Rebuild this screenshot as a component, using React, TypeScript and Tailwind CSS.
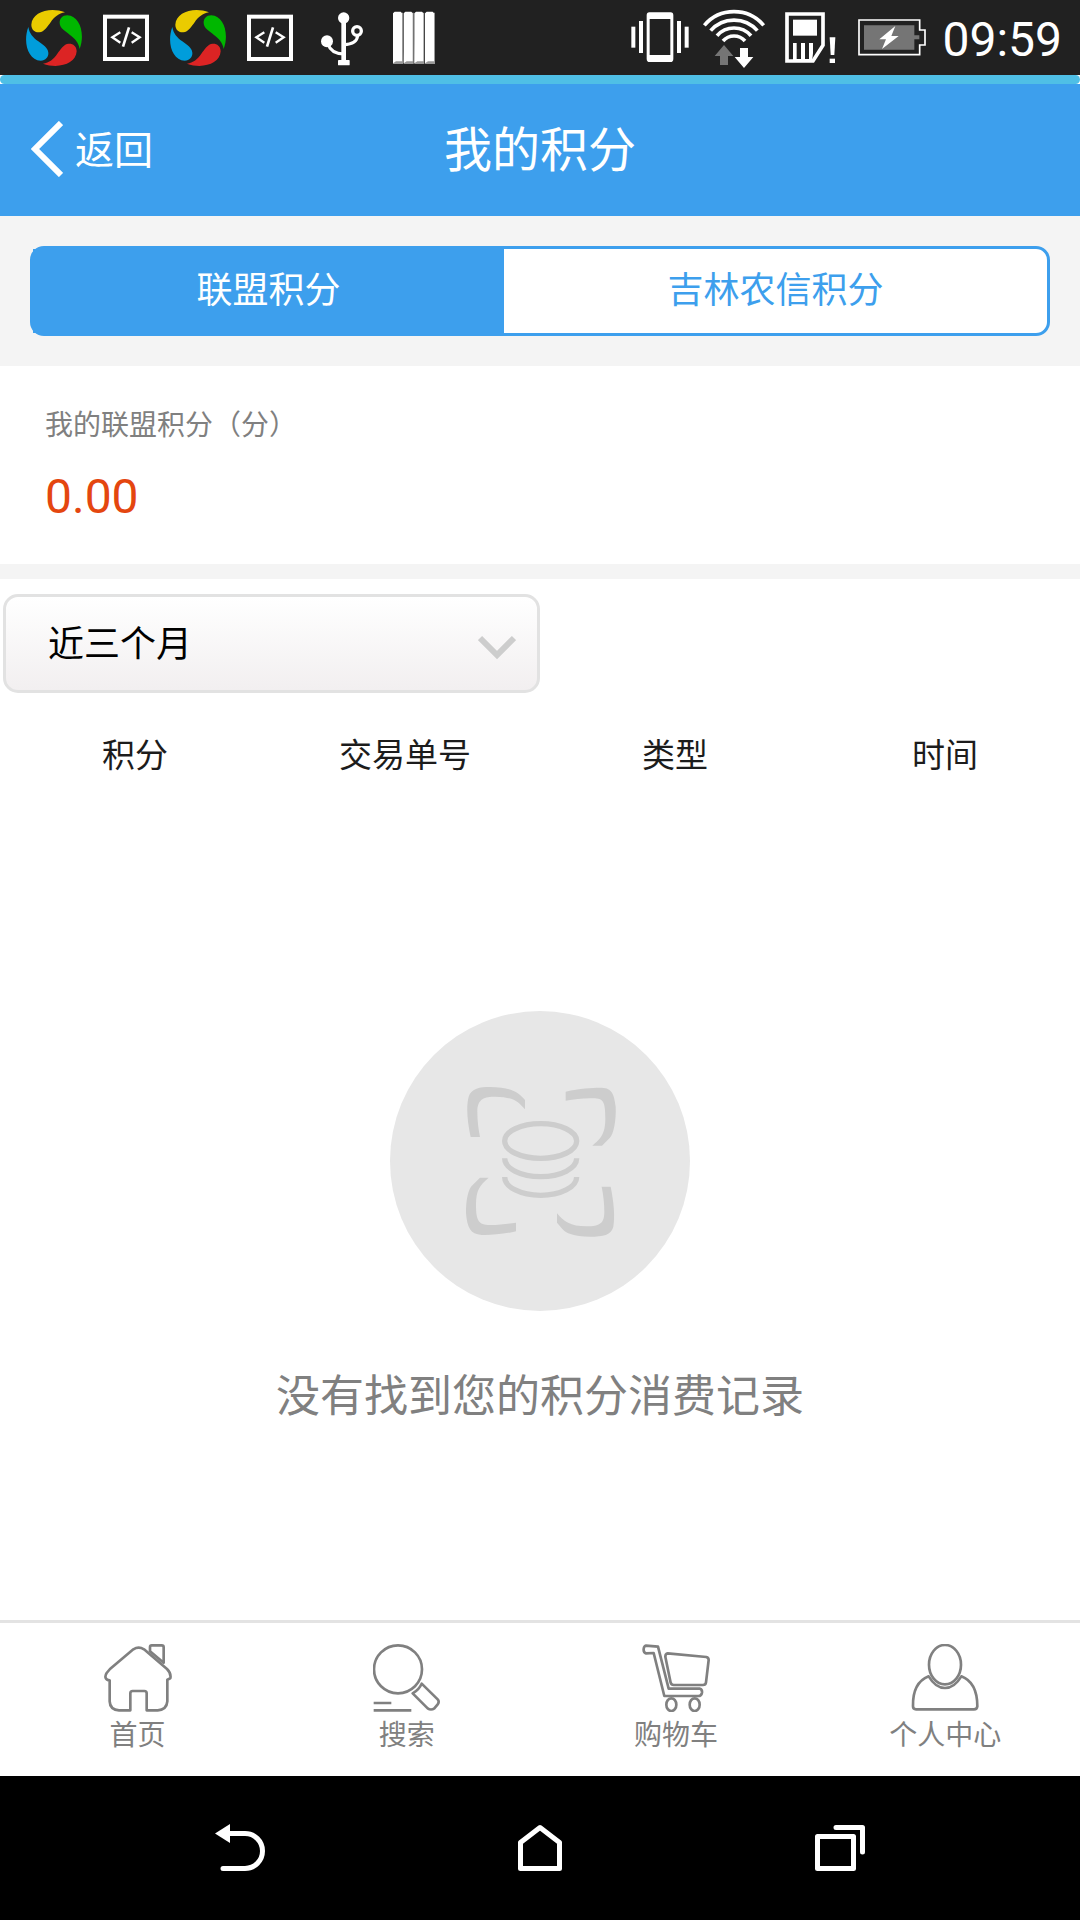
import { useState } from "react";
import type { ReactNode } from "react";

const blade =
  "M195 37 C150 20 96 36 94 74 C94 90 106 98 118 97 C133 96 142 80 152 67 C163 51 176 40 195 37Z";

function PinwheelIcon() {
  return (
    <svg viewBox="78 30 168 168" className="w-14 h-14" aria-hidden="true">
      <path d={blade} fill="#eacb00" />
      <path d={blade} fill="#00b700" transform="rotate(90 162 114)" />
      <path d={blade} fill="#dc2424" transform="rotate(180 162 114)" />
      <path d={blade} fill="#009ddb" transform="rotate(270 162 114)" />
    </svg>
  );
}

function CodeIcon() {
  return (
    <svg viewBox="294 30 168 168" className="w-14 h-14" fill="none" stroke="#fff" aria-hidden="true">
      <rect x="315" y="50" width="126" height="127" strokeWidth="12" />
      <path d="M361 97 L337 112 L361 128 M395 97 L419 112 L395 128" strokeWidth="7" />
      <path d="M387 82 L369 140" strokeWidth="8" />
    </svg>
  );
}

function UsbIcon() {
  return (
    <svg viewBox="942 30 168 168" className="w-14 h-14" fill="none" stroke="#fff" aria-hidden="true">
      <circle cx="1031" cy="54" r="17" fill="#fff" stroke="none" />
      <circle cx="981" cy="124" r="18" fill="#fff" stroke="none" />
      <circle cx="1071" cy="93" r="13" strokeWidth="10" />
      <path d="M1031 54 V184" strokeWidth="14" />
      <rect x="1014" y="180" width="35" height="16" rx="2" fill="#fff" stroke="none" />
      <path d="M984 132 C990 152 1006 161 1031 162" strokeWidth="9" />
      <path d="M1073 106 C1072 124 1056 133 1031 134" strokeWidth="9" />
    </svg>
  );
}

function StripesIcon() {
  return (
    <svg viewBox="1158 30 168 168" className="w-14 h-14" aria-hidden="true">
      {[1179, 1211, 1243, 1275].map((x) => (
        <g key={x} transform={`translate(${x} 0)`}>
          <path d="M4 38 H30 V192 H0 Z" fill="#999" />
          <path d="M0 40 L5 35 H23 L27 40 V184 H9 L0 190 Z" fill="#fff" />
        </g>
      ))}
    </svg>
  );
}

function VibrateIcon() {
  return (
    <svg viewBox="78 24 192 180" className="w-16 h-[60px]" fill="#fff" aria-hidden="true">
      <path
        fillRule="evenodd"
        d="M148 37 H212 Q220 37 220 46 V176 Q220 186 211 186 H149 Q140 186 140 176 V46 Q140 37 148 37Z M149 57 V165 H211 V57Z"
      />
      <rect x="94" y="80" width="12" height="63" />
      <rect x="117" y="63" width="12" height="96" />
      <rect x="231" y="63" width="12" height="96" />
      <rect x="254" y="80" width="12" height="63" />
    </svg>
  );
}

function WifiIcon() {
  return (
    <svg viewBox="306 24 204 180" className="w-[68px] h-[60px]" fill="none" stroke="#fff" strokeWidth="11" aria-hidden="true">
      <path d="M313 76 A117 117 0 0 1 491 76" />
      <path d="M332 92 A93 93 0 0 1 472 92" />
      <path d="M351 107 A68 68 0 0 1 453 107" />
      <path d="M369 123 A44 44 0 0 1 435 123" />
      <path d="M372 135 L400 168 H384 V195 H360 V168 H344Z" fill="#757575" stroke="none" />
      <path d="M432 204 L460 171 H444 V144 H420 V171 H404Z" fill="#fff" stroke="none" />
    </svg>
  );
}

function SimIcon() {
  return (
    <svg viewBox="546 24 192 180" className="w-16 h-[60px]" fill="#fff" aria-hidden="true">
      <path d="M561 42 H669 V136 L639 183 H561Z" fill="none" stroke="#fff" strokeWidth="11" />
      <rect x="579" y="59" width="72" height="48" />
      <path d="M579 129 H590 V177 H603 V129 H615 V177 H627 V129 H639 V160 L636 185 H579Z" />
      <path d="M689 112 H706 L703 165 H692Z" />
      <rect x="689" y="176" width="16" height="13" />
    </svg>
  );
}

function BatteryIcon() {
  return (
    <svg viewBox="774 24 216 180" className="w-[72px] h-[60px]" aria-hidden="true">
      <path d="M777 60 H959 V90 H975 V135 H959 V164 H777Z" fill="none" stroke="#fff" strokeWidth="5" />
      <path d="M792 76 H943 V106 H958 V118 H943 V149 H792Z" fill="#757575" />
      <path d="M886 78 L838 118 H858 L846 147 L896 108 H874Z" fill="#fff" />
    </svg>
  );
}

function StatusBar() {
  return (
    <div className="flex justify-between bg-[#212121] h-[75px] pt-2 pl-[26px] pr-[18px]">
      <div className="flex items-center gap-4 h-[60px]">
        <PinwheelIcon />
        <CodeIcon />
        <PinwheelIcon />
        <CodeIcon />
        <UsbIcon />
        <StripesIcon />
      </div>
      <div className="flex items-center gap-3 h-[60px]">
        <VibrateIcon />
        <WifiIcon />
        <SimIcon />
        <BatteryIcon />
        <span className="pt-[3px] text-white text-[48px] leading-[60px]">09:59</span>
      </div>
    </div>
  );
}

function EmptyIcon() {
  return (
    <svg viewBox="60 63 900 900" className="w-[300px] h-[300px]" aria-hidden="true">
      <circle cx="510" cy="513" r="450" fill="#e7e7e7" />
      {/* frame corners */}
      <g fill="#cdcdcd">
        <path d="M302 441 C292 395 288 350 296 320 C304 295 330 291 360 291 C415 292 442 302 465 330 V358 C443 335 437 322 375 320 C345 320 322 325 322 365 C322 395 326 420 330 441Z" />
        <path d="M587 305 C630 295 665 293 690 293 C722 293 732 305 737 350 C739 390 731 432 719 444 L696 467 H667 C690 448 706 435 706 385 C706 335 700 325 670 325 C640 324 615 328 587 332Z" />
        <path d="M438 698 V724 C400 733 360 736 335 735 C300 733 292 712 288 670 C288 630 294 597 308 585 L330 563 H356 C330 585 318 600 318 645 C318 690 325 705 360 705 C390 705 415 701 438 698Z" />
        <path d="M722 590 C732 640 735 680 730 710 C724 735 700 740 660 740 C610 739 588 730 577 717 L561 698 V670 C582 695 600 709 650 709 C690 708 703 700 703 665 C703 640 700 615 695 590Z" />
      </g>
      {/* stack of coins */}
      <g fill="none" stroke="#cdcdcd" strokeWidth="16">
        <ellipse cx="512" cy="453" rx="108" ry="52" />
        <path d="M404 505 A108 55 0 0 0 620 505" />
        <path d="M404 561 A108 55 0 0 0 620 561" />
      </g>
    </svg>
  );
}

function NavIcon({ viewBox, children }: { viewBox: string; children: ReactNode }) {
  return (
    <svg
      viewBox={viewBox}
      className="w-[68px] h-[68px]"
      fill="none"
      stroke="#808080"
      strokeWidth="8"
      strokeLinejoin="round"
      aria-hidden="true"
    >
      {children}
    </svg>
  );
}

const navItems = [
  {
    label: "首页",
    icon: (
      <NavIcon viewBox="129 132 204 204">
        <path d="M146 241 C133 240 130 230 137 219 L147 207 L217 148 Q233 138 249 148 L318 207 C327 216 330 226 328 235 L319 239 V304 Q317 329 290 331 H257 V280 Q257 273 250 273 H215 Q208 273 208 280 V331 H174 Q147 329 146 304Z" />
        <path d="M267 154 V141 Q267 136 272 136 H302 Q308 136 308 142 V188Z" />
      </NavIcon>
    ),
  },
  {
    label: "搜索",
    icon: (
      <NavIcon viewBox="938 132 204 204">
        <circle cx="1013" cy="208" r="72" />
        <path d="M1084 251 L1132 298 Q1138 305 1132 313 L1122 325 Q1112 332 1102 325 L1057 280 Q1076 269 1084 251Z" />
        <path d="M940 309 H993 M940 331 H1053" />
      </NavIcon>
    ),
  },
  {
    label: "购物车",
    icon: (
      <NavIcon viewBox="186 134 204 204">
        <path d="M198 139 L234 142 L266 268 H360 Q367 270 366 280 Q364 290 355 290 H253 L221 161 L198 162 Q190 160 191 149 Q192 140 198 139Z" />
        <path d="M263 162 L379 173 Q386 175 386 182 L378 249 Q377 257 369 257 H281 Q274 257 272 250 L256 172 Q256 163 263 162Z" />
        <ellipse cx="274" cy="316" rx="15" ry="19" />
        <ellipse cx="344" cy="316" rx="15" ry="19" />
      </NavIcon>
    ),
  },
  {
    label: "个人中心",
    icon: (
      <NavIcon viewBox="998 132 204 204">
        <ellipse cx="1100" cy="194" rx="48" ry="59" />
        <path d="M1051 229 Q1072 264 1100 264 Q1128 264 1149 229 C1183 242 1197 275 1197 319 Q1196 328 1187 328 H1013 Q1004 328 1004 319 C1003 275 1018 242 1051 229Z" />
      </NavIcon>
    ),
  },
];

function BottomNav() {
  return (
    <nav className="grid grid-cols-4 border-t-[3px] border-[#e3e3e3] pl-[3px] pt-[21px] pb-5">
      {navItems.map((item) => (
        <a key={item.label} href="#" className="flex flex-col items-center gap-1 text-[#808080] text-[28px] leading-10">
          {item.icon}
          <span>{item.label}</span>
        </a>
      ))}
    </nav>
  );
}

function SystemBar() {
  return (
    <div className="grid grid-cols-3 items-center bg-black h-36 px-[90px]">
      <button type="button" aria-label="Back" className="flex justify-center">
        <svg viewBox="0 0 52 48" className="w-[52px] h-12" fill="none" stroke="#fff" strokeWidth="5" strokeLinecap="round">
          <path d="M14 9.5 H31 A17.5 17.5 0 0 1 31 44.5 H9" />
          <path d="M1 9.5 L16 0 V19Z" fill="#fff" stroke="none" />
        </svg>
      </button>
      <button type="button" aria-label="Home" className="flex justify-center">
        <svg viewBox="0 0 52 48" className="w-[52px] h-12" fill="none" stroke="#fff" strokeWidth="5" strokeLinejoin="round">
          <path d="M6.5 44.5 V18.5 L26 3.5 L45.5 18.5 V44.5Z" />
        </svg>
      </button>
      <button type="button" aria-label="Recent apps" className="flex justify-center">
        <svg viewBox="0 0 52 48" className="w-[52px] h-12" fill="none" stroke="#fff" strokeWidth="5" strokeLinecap="round" strokeLinejoin="round">
          <rect x="3.5" y="12.5" width="36" height="32" />
          <path d="M22 3.5 H48.5 V28" />
        </svg>
      </button>
    </div>
  );
}

const tabs = ["联盟积分", "吉林农信积分"];
const columns = ["积分", "交易单号", "类型", "时间"];

export default function App() {
  const [tab, setTab] = useState(0);
  const [range, setRange] = useState("3");

  return (
    <div className="flex flex-col min-h-screen bg-white font-['Roboto','Noto_Sans_CJK_SC',sans-serif]">
      <StatusBar />
      <div className="h-[9px] rounded-[5px] bg-[#4fbfe6]" />

      <header className="grid grid-cols-[1fr_auto_1fr] items-center h-[132px] px-[31px] pt-0.5 bg-[#3d9fed] text-white">
        <button type="button" className="flex items-center gap-3 justify-self-start text-[39px] leading-[60px]">
          <svg viewBox="0 0 32 56" className="w-8 h-14 mb-1" fill="none" stroke="#fff" strokeWidth="6" aria-hidden="true">
            <path d="M30 2 L4 28 L30 54" />
          </svg>
          返回
        </button>
        <h1 className="text-[48px] leading-[60px]">我的积分</h1>
      </header>

      <div className="bg-[#f4f4f4] p-[30px]">
        <div className="flex h-[90px] rounded-[14px] border-[3px] border-[#3d9fed] bg-white">
          {tabs.map((name, i) => (
            <button
              key={name}
              type="button"
              onClick={() => setTab(i)}
              className={
                tab === i
                  ? "flex-auto text-[36px] bg-[#3d9fed] text-white"
                  : "flex-auto text-[36px] text-[#3d9fed]"
              }
            >
              {name}
            </button>
          ))}
        </div>
      </div>

      <main className="flex-1">
        <section className="pt-10 pb-[37px] px-[45px] border-b-[15px] border-[#f4f4f4]">
          <p className="text-[28px] leading-10 text-[#808080]">我的联盟积分（分）</p>
          <p className="mt-[21px] text-[48px] leading-[60px] text-[#e4460f]">0.00</p>
        </section>

        <div className="relative w-1/2 pl-[3px] pt-[15px]">
          <select
            aria-label="时间范围"
            value={range}
            onChange={(e) => setRange(e.target.value)}
            className="appearance-none block w-full h-[99px] pl-[42px] pt-0.5 rounded-[15px] border-[3px] border-[#e2e2e2] bg-linear-to-b from-white to-[#f2eff0] text-[36px] text-black"
          >
            <option value="3">近三个月</option>
            <option value="6">近六个月</option>
            <option value="12">近一年</option>
          </select>
          <svg
            viewBox="0 0 38 26"
            className="absolute right-6 bottom-8 w-[38px] h-[26px] pointer-events-none"
            fill="none"
            stroke="#cdcdcd"
            strokeWidth="6"
            aria-hidden="true"
          >
            <path d="M2 3 L19 20 L36 3" />
          </svg>
        </div>

        <table className="table-fixed w-full mt-[39px]">
          <thead>
            <tr>
              {columns.map((c) => (
                <th key={c} className="font-normal text-[33px] leading-[48px] text-[#1c1c1c]">
                  {c}
                </th>
              ))}
            </tr>
          </thead>
        </table>

        <div className="flex flex-col items-center mt-[231px]">
          <EmptyIcon />
          <p className="mt-14 text-[44px] leading-[60px] text-[#808080]">没有找到您的积分消费记录</p>
        </div>
      </main>

      <BottomNav />
      <SystemBar />
    </div>
  );
}
